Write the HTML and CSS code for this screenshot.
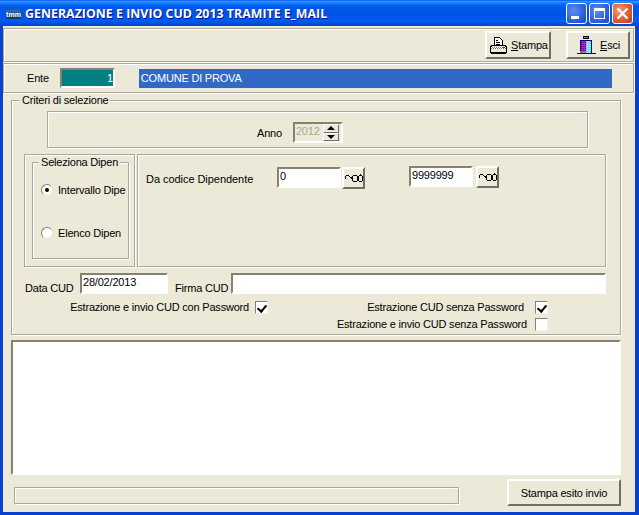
FILE: index.html
```html
<!DOCTYPE html>
<html lang="it">
<head>
    <meta charset="UTF-8">
    <title>GENERAZIONE E INVIO CUD 2013 TRAMITE E_MAIL</title>
    <link rel="stylesheet" href="styles.css">
</head>
<body>
    <div class="window">
        <div class="titlebar">
            <span class="app-icon">tmm</span>
            <span class="title-text">GENERAZIONE E INVIO CUD 2013 TRAMITE E_MAIL</span>
            <div class="win-buttons">
                <div class="win-btn">
                    <svg width="21" height="21" viewBox="0 0 21 21"><rect x="5" y="13" width="8" height="3" fill="#fff"/></svg>
                </div>
                <div class="win-btn">
                    <svg width="21" height="21" viewBox="0 0 21 21"><path d="M5 5h11v11H5z M6 8v7h9V8z" fill="#fff" fill-rule="evenodd"/></svg>
                </div>
                <div class="win-btn win-close">
                    <svg width="21" height="21" viewBox="0 0 21 21"><path d="M5.500 5.500l10 10M15.500 5.500l-10 10" stroke="#fff" stroke-width="2.200" fill="none"/></svg>
                </div>
            </div>
        </div>

        <div class="client">
            <div class="toolbar etched">
                <button class="btn tool-stampa">
                    <svg width="17" height="17" viewBox="0 0 17 17" shape-rendering="crispEdges">
                        <defs>
                            <pattern id="dots" width="2" height="2" patternUnits="userSpaceOnUse">
                                <rect width="2" height="2" fill="#fff"/>
                                <rect width="1" height="1" fill="#777"/>
                                <rect x="1" y="1" width="1" height="1" fill="#777"/>
                            </pattern>
                        </defs>
                        <path d="M4.500 .5h5l2.500 2.500v6h-7.500z" fill="#fff" stroke="#000"/>
                        <path d="M6 3h2M6 5h4M6 7h4" stroke="#000"/>
                        <path d="M.5 9.500l2-1h12l2 1v6H.5z" fill="#ece9d8" stroke="#000"/>
                        <rect x="1" y="10" width="15" height="2" fill="url(#dots)"/>
                        <rect x="13" y="10" width="2" height="1" fill="#e00000"/>
                        <rect x="1" y="15" width="15" height="2" fill="#000"/>
                    </svg>
                    <span><u>S</u>tampa</span>
                </button>
                <button class="btn tool-esci">
                    <svg width="19" height="18" viewBox="0 0 19 18" shape-rendering="crispEdges">
                        <defs>
                            <pattern id="mag" width="2" height="2" patternUnits="userSpaceOnUse">
                                <rect width="2" height="2" fill="#e000d0"/>
                                <rect width="1" height="1" fill="#400080"/>
                            </pattern>
                            <pattern id="cya" width="2" height="2" patternUnits="userSpaceOnUse">
                                <rect width="2" height="2" fill="#40f0f0"/>
                                <rect width="1" height="1" fill="#fff"/>
                            </pattern>
                        </defs>
                        <rect x="6" y="0" width="6" height="3" fill="#000"/>
                        <rect x="7" y="1" width="4" height="1" fill="#00e000"/>
                        <rect x="3" y="4" width="12" height="1" fill="#000080"/>
                        <rect x="3" y="5" width="1" height="12" fill="#000080"/>
                        <rect x="4" y="5" width="5" height="12" fill="url(#mag)"/>
                        <rect x="9" y="5" width="5" height="12" fill="url(#cya)"/>
                        <rect x="14" y="5" width="1" height="12" fill="#000080"/>
                        <rect x="3" y="15" width="6" height="2" fill="#808080"/>
                        <rect x="0" y="17" width="19" height="1" fill="#000080"/>
                    </svg>
                    <span><u>E</u>sci</span>
                </button>
            </div>

            <div class="ente-bar etched">
                <span class="ente-label">Ente</span>
                <div class="ente-code sunken">1</div>
                <div class="ente-name">COMUNE DI PROVA</div>
            </div>

            <fieldset class="criteria">
                <legend>Criteri di selezione</legend>
                <div class="anno-panel etched">
                    <span class="anno-label">Anno</span>
                    <div class="spinner sunken">
                        <span class="spinner-value">2012</span>
                        <div class="spin-buttons">
                            <div class="spin-btn"><i class="arrow-up"></i></div>
                            <div class="spin-btn"><i class="arrow-down"></i></div>
                        </div>
                    </div>
                </div>

                <div class="select-row">
                    <div class="radio-panel etched">
                        <fieldset class="radio-group">
                            <legend>Seleziona Dipen</legend>
                            <div class="radio-item radio-first"><i class="radio checked"></i>Intervallo Dipe</div>
                            <div class="radio-item radio-second"><i class="radio"></i>Elenco Dipen</div>
                        </fieldset>
                    </div>
                    <div class="range-panel etched">
                        <span class="range-label">Da codice Dipendente</span>
                        <div class="input sunken range-from">0</div>
                        <button class="btn lookup lookup-from">
                            <svg width="18" height="12" viewBox="0 0 18 12" shape-rendering="crispEdges"><path d="M.5 7V4.500l1-1h2l2 2 2 1M8.500 3.500h3l1 1v4l-1 1h-3l-1-1v-4zM14.500 3.500h2l1 1v4l-1 1h-2l-1-1v-4zM12.500 5.500h1M15.500 3.500V2" fill="none" stroke="#000"/></svg>
                        </button>
                        <div class="input sunken range-to">9999999</div>
                        <button class="btn lookup lookup-to">
                            <svg width="18" height="12" viewBox="0 0 18 12" shape-rendering="crispEdges"><path d="M.5 7V4.500l1-1h2l2 2 2 1M8.500 3.500h3l1 1v4l-1 1h-3l-1-1v-4zM14.500 3.500h2l1 1v4l-1 1h-2l-1-1v-4zM12.500 5.500h1M15.500 3.500V2" fill="none" stroke="#000"/></svg>
                        </button>
                    </div>
                </div>

                <div class="data-row">
                    <span class="data-label">Data CUD</span>
                    <div class="input sunken data-field">28/02/2013</div>
                    <span class="firma-label">Firma CUD</span>
                    <div class="input sunken firma-field"></div>
                </div>

                <div class="checks">
                    <div class="check check-con">Estrazione e invio CUD con Password<i class="box checked"></i></div>
                    <div class="check check-senza">Estrazione CUD senza Password<i class="box checked"></i></div>
                    <div class="check check-invio">Estrazione e invio CUD senza Password<i class="box"></i></div>
                </div>
            </fieldset>

            <div class="memo sunken"></div>

            <div class="footer">
                <div class="status etched"></div>
                <button class="btn print-result">Stampa esito invio</button>
            </div>
        </div>
    </div>
</body>
</html>
```

FILE: styles.css
```css
* {
    box-sizing: border-box;
}
html, body {
    margin: 0;
    padding: 0;
}
body {
    font-family: "Liberation Sans", sans-serif;
    font-size: 11px;
    letter-spacing: -0.2px;
    color: #000;
    background-color: #0054e3;
    overflow: hidden;
}
.window {
    width: 639px;
    height: 515px;
    display: flex;
    flex-direction: column;
    background-color: #0842d0;
}
.titlebar {
    height: 26px;
    flex: none;
    display: flex;
    align-items: center;
    padding: 0 6px;
    background: linear-gradient(to bottom, #0058ee 0%, #3593ff 6%, #127dff 12%, #0262ee 20%, #0057e5 35%, #0054e3 55%, #005bf5 80%, #0046c8 100%);
}
.app-icon {
    width: 15px;
    height: 9px;
    margin-top: 2px;
    background: linear-gradient(to bottom, #3a6aa8, #12306e);
    color: #fff;
    font-size: 7px;
    font-weight: 700;
    letter-spacing: 0;
    line-height: 9px;
    text-align: center;
    overflow: hidden;
}
.title-text {
    margin-left: 4px;
    color: #fff;
    font-family: "Open Sans", sans-serif;
    font-weight: 700;
    font-size: 12.4px;
    letter-spacing: 0;
    white-space: nowrap;
    text-shadow: 1px 1px 0 #0f1089;
}
.win-buttons {
    margin-left: auto;
    display: flex;
    gap: 2px;
}
.win-btn {
    width: 21px;
    height: 21px;
    border: 1px solid #fff;
    border-radius: 3px;
    background: radial-gradient(circle at 35% 35%, #5f8ff0 0%, #2c5fe0 60%, #1a45c8 100%);
}
.win-btn svg {
    display: block;
    margin: -1px;
}
.win-close {
    background: radial-gradient(circle at 35% 35%, #f0a080 0%, #e0603a 50%, #c03a14 100%);
}
.client {
    flex: 1;
    margin: 0 4px 3px 3px;
    background-color: #ece9d8;
}
.etched {
    border: 1px solid #aca899;
    box-shadow: 1px 1px 0 #fff, inset 1px 1px 0 #fff;
}
.sunken {
    border-style: solid;
    border-width: 2px;
    border-color: #85836f #fff #fff #85836f;
}
.btn {
    font: inherit;
    letter-spacing: inherit;
    color: #000;
    background-color: #ece9d8;
    border-style: solid;
    border-width: 2px;
    border-color: #fff #716f64 #716f64 #fff;
    padding: 0;
    display: flex;
    align-items: center;
    justify-content: center;
}
.toolbar {
    height: 34px;
    margin-top: 2px;
    margin-right: 1px;
    display: flex;
    justify-content: flex-end;
    gap: 15px;
    padding: 2px 3px 0 0;
}
.tool-stampa, .tool-esci {
    height: 28px;
    justify-content: flex-start;
}
.tool-stampa {
    width: 66px;
    gap: 4px;
    padding-left: 3px;
}
.tool-esci {
    width: 64px;
    gap: 4px;
    padding-left: 9px;
}
.ente-bar {
    height: 30px;
    margin-top: 1px;
    margin-right: 1px;
    display: flex;
    align-items: center;
}
.ente-label {
    margin-left: 23px;
}
.ente-code {
    width: 55px;
    height: 20px;
    margin-left: 11px;
    background-color: #008080;
    color: #fff;
    text-align: right;
    line-height: 16px;
}
.ente-name {
    width: 473px;
    height: 19px;
    margin-left: 24px;
    padding-left: 2px;
    background-color: #316ac5;
    color: #fff;
    line-height: 19px;
}
fieldset {
    margin: 0;
    padding: 0;
    min-width: 0;
    border: 1px solid #aca899;
    box-shadow: 1px 1px 0 #fff, inset 1px 1px 0 #fff;
}
legend {
    padding: 0 2px;
    line-height: 13px;
    background-color: #ece9d8;
    white-space: nowrap;
}
.criteria {
    width: 610px;
    height: 241px;
    margin: 1px 0 0 8px;
}
.criteria > legend {
    margin-left: 8px;
}
.anno-panel {
    width: 541px;
    height: 37px;
    margin: 4px 0 0 35px;
    display: flex;
    align-items: flex-start;
    padding-top: 10px;
}
.anno-label {
    margin: 5px 0 0 209px;
}
.spinner {
    width: 50px;
    height: 21px;
    margin-left: 11px;
    display: flex;
    justify-content: space-between;
    padding-right: 1px;
}
.spinner-value {
    color: #aca899;
    line-height: 15px;
    padding-left: 1px;
}
.spin-buttons {
    width: 16px;
    display: flex;
    flex-direction: column;
    margin-right: 1px;
}
.spin-btn {
    flex: 1;
    background-color: #ece9d8;
    border: 1px solid;
    border-color: #fff #716f64 #716f64 #fff;
    display: flex;
    align-items: center;
    justify-content: center;
}
.arrow-up, .arrow-down {
    width: 0;
    height: 0;
    border-left: 4px solid transparent;
    border-right: 4px solid transparent;
}
.arrow-up {
    border-bottom: 4px solid #000;
}
.arrow-down {
    border-top: 4px solid #000;
}
.select-row {
    display: flex;
    gap: 2px;
    height: 113px;
    margin: 6px 0 0 12px;
}
.radio-panel {
    width: 111px;
    padding: 1px 0 0 7px;
}
.radio-group {
    width: 97px;
    height: 103px;
}
.radio-group legend {
    margin-left: 6px;
}
.radio-item {
    display: flex;
    align-items: center;
    gap: 5px;
    margin-left: 8px;
    white-space: nowrap;
    height: 14px;
}
.radio-first {
    margin-top: 14px;
}
.radio-second {
    margin-top: 29px;
}
.radio {
    flex: none;
    width: 12px;
    height: 12px;
    border-radius: 50%;
    background-color: #fff;
    border: 1px solid;
    border-color: #85836f #e8e6d8 #e8e6d8 #85836f;
    position: relative;
}
.radio.checked::after {
    content: "";
    position: absolute;
    left: 3px;
    top: 3px;
    width: 4px;
    height: 4px;
    border-radius: 50%;
    background-color: #000;
}
.range-panel {
    width: 469px;
    display: flex;
    align-items: flex-start;
}
.range-label {
    margin: 18px 0 0 8px;
    width: 131px;
    letter-spacing: -0.05px;
}
.input {
    background-color: #fff;
    height: 21px;
    padding-left: 1px;
    line-height: 14px;
    white-space: nowrap;
}
.range-from {
    width: 64px;
    margin-top: 12px;
}
.lookup {
    width: 23px;
    height: 22px;
}
.lookup-from {
    margin: 12px 0 0 1px;
}
.range-to {
    width: 64px;
    margin: 11px 0 0 44px;
}
.lookup-to {
    margin: 11px 0 0 3px;
}
.data-row {
    display: flex;
    align-items: flex-start;
    margin: 6px 0 0 13px;
}
.data-label {
    margin-top: 9px;
    width: 55px;
    white-space: nowrap;
}
.data-field {
    width: 88px;
}
.firma-label {
    margin: 9px 0 0 7px;
    width: 56px;
    white-space: nowrap;
}
.firma-field {
    width: 375px;
}
.checks {
    display: grid;
    grid-template-columns: 256px 280px;
    row-gap: 5px;
    margin-top: 7px;
}
.check {
    display: flex;
    justify-content: flex-end;
    align-items: center;
    height: 12px;
    white-space: nowrap;
}
.check-invio {
    grid-column: 2;
}
.box {
    flex: none;
    width: 13px;
    height: 13px;
    background-color: #fff;
    border: 1px solid;
    border-color: #85836f #f4f2e8 #f4f2e8 #85836f;
    position: relative;
}
.box.checked::after {
    content: "";
    position: absolute;
    left: 3px;
    top: 1px;
    width: 4px;
    height: 7px;
    border: solid #000;
    border-width: 0 2px 2px 0;
    transform: rotate(40deg);
}
.check-con .box {
    margin-left: 6px;
}
.check-senza .box {
    margin-left: 11px;
}
.check-invio .box {
    margin-left: 8px;
}
.memo {
    width: 610px;
    height: 135px;
    margin: 5px 0 0 8px;
    background-color: #fff;
}
.footer {
    display: flex;
    align-items: flex-start;
    margin: 4px 0 0 11px;
}
.status {
    width: 445px;
    height: 17px;
    margin-top: 8px;
}
.print-result {
    width: 114px;
    height: 27px;
    margin-left: 48px;
}
```
